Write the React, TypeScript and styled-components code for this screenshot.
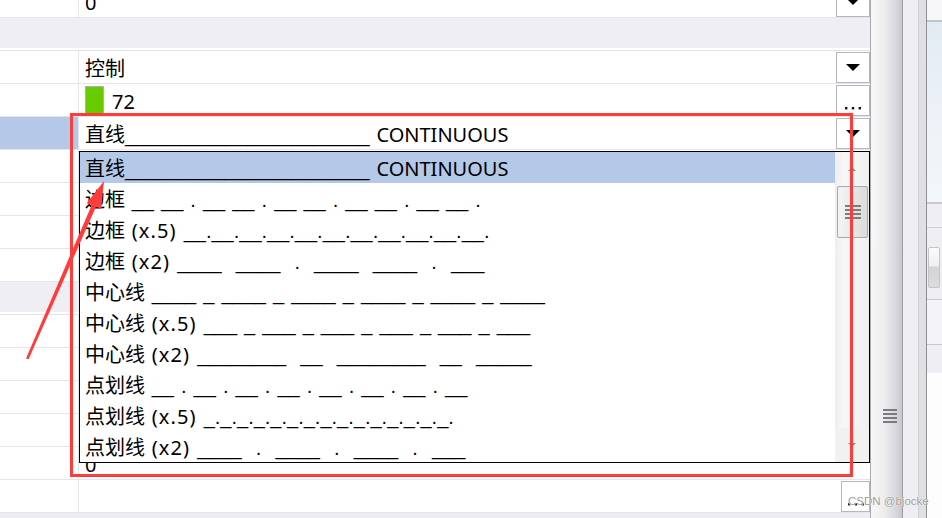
import React from "react";
import styled, { createGlobalStyle } from "styled-components";

const Global = createGlobalStyle`
  html, body { margin: 0; padding: 0; background: #fff; }
  body {
    width: 942px; height: 518px; overflow: hidden;
    font-family: "Noto Sans", "Noto Sans CJK SC", sans-serif;
    color: #000;
  }
`;

const Page = styled.div`
  position: relative;
  width: 942px;
  height: 518px;
  display: flex;
  overflow: hidden;
  background: #fff;
`;

const Grid = styled.div`
  position: relative;
  width: 871px;
  flex: none;
  display: flex;
  flex-direction: column;
  border-right: 1px solid #a9a9b1;
  box-sizing: border-box;
  overflow: hidden;
`;

const Rows = styled.div`
  margin-top: -15px;
  display: flex;
  flex-direction: column;
`;

const Row = styled.div`
  height: 33px;
  flex: none;
  box-sizing: border-box;
  border-bottom: 1px solid #e5e5eb;
  display: flex;
`;

const CategoryRow = styled.div`
  height: 33px;
  flex: none;
  box-sizing: border-box;
  border-bottom: 1px solid #e2e2e8;
  padding-bottom: 2px;
  display: flex;
`;

const CategoryBand = styled.div`
  flex: 1;
  background: #eeeef3;
`;

const NameCell = styled.div<{ $selected?: boolean }>`
  width: 79px;
  flex: none;
  box-sizing: border-box;
  border-right: 1px solid #e5e5eb;
  background: ${(p) => (p.$selected ? "#b4c8e8" : "#fff")};
`;

const ValueCell = styled.div`
  flex: 1;
  display: flex;
  align-items: center;
  padding-left: 6px;
  min-width: 0;
  font-size: 20px;
  line-height: 24px;
  white-space: pre;
  word-spacing: 1.5px;
`;

const ValueText = styled.div`
  flex: 1;
  min-width: 0;
  overflow: hidden;
  padding-top: 4px;
`;

const Swatch = styled.span`
  width: 19px;
  height: 28px;
  box-sizing: border-box;
  border: 1px solid #b0b0b6;
  background: #66cc00;
  margin-right: 8px;
  flex: none;
`;

const CellButton = styled.div<{ $narrow?: boolean; $dots?: boolean }>`
  width: ${(p) => (p.$narrow ? 29 : 34)}px;
  height: 31px;
  flex: none;
  align-self: flex-start;
  margin-top: 1px;
  box-sizing: border-box;
  border: 1px solid #b6b6be;
  background: #fff;
  display: flex;
  justify-content: center;
  align-items: ${(p) => (p.$dots ? "flex-end" : "center")};
  padding-bottom: ${(p) => (p.$dots ? 5 : 0)}px;
`;

const BottomStrip = styled.div`
  flex: 1;
  background: #eeeef2;
`;

const Pattern = styled.span`
  font-family: "Liberation Sans", sans-serif;
`;

const Suffix = styled.span`
  letter-spacing: 1.1px;
`;

/* dropdown list overlay */
const Dropdown = styled.div`
  position: absolute;
  left: 79px;
  top: 151px;
  width: 791px;
  height: 312px;
  box-sizing: border-box;
  border: 1px solid #000;
  background: #fff;
  display: flex;
  z-index: 2;
`;

const List = styled.div`
  flex: 1;
  display: flex;
  flex-direction: column;
  min-width: 0;
`;

const Item = styled.div<{ $selected?: boolean }>`
  height: 31px;
  flex: none;
  box-sizing: border-box;
  display: flex;
  align-items: center;
  padding-left: 5px;
  padding-top: 2px;
  font-size: 20px;
  line-height: 24px;
  white-space: pre;
  word-spacing: 1.5px;
  background: ${(p) => (p.$selected ? "#b4c8e8" : "#fff")};
`;

const ListScroll = styled.div`
  width: 34px;
  flex: none;
  display: flex;
  flex-direction: column;
  align-items: center;
  background: linear-gradient(to right, #eeeeee, #f7f7f7 25%, #f3f3f3 80%, #ececec);
`;

const ArrowBox = styled.div<{ $bottom?: boolean }>`
  height: 34px;
  width: 100%;
  flex: none;
  display: flex;
  align-items: center;
  justify-content: center;
  background: ${(p) => (p.$bottom ? "#f1f1f1" : "transparent")};
`;

const ListThumb = styled.div`
  width: 31px;
  height: 52px;
  margin-left: 1px;
  box-sizing: border-box;
  border: 1px solid #a9a9ad;
  border-radius: 2px;
  background: linear-gradient(to right, #f4f4f4, #e9e9e9 50%, #d9d9db);
  display: flex;
  align-items: center;
  justify-content: center;
`;

const Grip = styled.div<{ $w: number }>`
  width: ${(p) => p.$w}px;
  height: 14px;
  background: repeating-linear-gradient(
    to bottom,
    #7c7c7c 0px,
    #7c7c7c 2px,
    transparent 2px,
    transparent 4px
  );
`;

const Spacer = styled.div`
  flex: 1;
`;

/* right-hand strips */
const VScroll = styled.div`
  width: 32px;
  flex: none;
  box-sizing: border-box;
  border-right: 1px solid #9c9ca4;
  background: linear-gradient(to right, #f7f7f7 0%, #eeeeef 40%, #d8d8dc 80%, #c7c7cc 100%);
  display: flex;
  flex-direction: column;
`;

const VThumb = styled.div`
  margin-top: auto;
  height: 204px;
  display: flex;
  align-items: center;
  justify-content: flex-end;
  padding-right: 5px;
`;

const LavStrip = styled.div`
  width: 15px;
  flex: none;
  background: #eeeef3;
  border-right: 1px solid #cfcfd6;
`;

const GrayStrip = styled.div`
  width: 7px;
  flex: none;
  background: #e0e0e2;
  border-right: 1px solid #8e8e96;
`;

const RightPanel = styled.div`
  flex: 1;
  display: flex;
  flex-direction: column;
  min-width: 0;
`;

const PanelBand = styled.div<{ $h: number; $bg: string; $line?: string; $lw?: number }>`
  height: ${(p) => p.$h}px;
  flex: none;
  background: ${(p) => p.$bg};
  border-bottom: ${(p) => (p.$line ? `${p.$lw ?? 1}px solid ${p.$line}` : "none")};
`;

const PanelButtonBand = styled.div`
  height: 72px;
  flex: none;
  background: #eeeef3;
  border-bottom: 1px solid #c8c8d0;
  padding-top: 19px;
  box-sizing: border-box;
`;

const PanelButton = styled.div`
  width: 12px;
  height: 41px;
  margin-left: 1px;
  box-sizing: border-box;
  border: 1px solid #c4c4c8;
  border-radius: 2px;
  background: linear-gradient(to bottom, #fafafa 0%, #f0f0f0 45%, #d4d4d6 50%, #dcdcde 100%);
`;

const PanelRest = styled.div`
  flex: 1;
  background: #fdfdfd;
`;

/* annotations */
const RedBox = styled.div`
  position: absolute;
  left: 70px;
  top: 113px;
  width: 783px;
  height: 364px;
  box-sizing: border-box;
  border: 3px solid #ff3c3c;
  z-index: 3;
  pointer-events: none;
`;

const ArrowSvg = styled.svg`
  position: absolute;
  left: 24px;
  top: 178px;
  width: 86px;
  height: 184px;
  z-index: 4;
  pointer-events: none;
`;

const Watermark = styled.div`
  position: absolute;
  left: 848px;
  top: 495px;
  font-family: "Liberation Sans", sans-serif;
  font-size: 11.5px;
  color: #9c9c9c;
  text-shadow: 0 0 1px #fff, 0 0 1px #fff;
  white-space: nowrap;
  z-index: 5;
`;

const DownTri = () => (
  <svg width="14" height="7" viewBox="0 0 14 7">
    <polygon points="0,0 14,0 7,7" fill="#000" />
  </svg>
);

const Dots = () => (
  <svg width="16" height="3" viewBox="0 0 16 3">
    <rect x="0" y="0" width="2.4" height="2.4" fill="#111" />
    <rect x="6.8" y="0" width="2.4" height="2.4" fill="#111" />
    <rect x="13.6" y="0" width="2.4" height="2.4" fill="#111" />
  </svg>
);

const SmallTri = ({ up }: { up?: boolean }) => (
  <svg width="8" height="4" viewBox="0 0 8 4">
    <polygon points={up ? "0,4 8,4 4,0" : "0,0 8,0 4,4"} fill="#8a8a8e" />
  </svg>
);

type LineType = { zh: string; sfx?: string; pat: string; tail?: string };

const solid: LineType = { zh: "直线", pat: "_".repeat(22), tail: " CONTINUOUS" };

const lineTypes: LineType[] = [
  solid,
  { zh: "边框 ", pat: "__ __ . __ __ . __ __ . __ __ . __ __ ." },
  { zh: "边框 ", sfx: "(x.5)", pat: " __.__.__.__.__.__.__.__.__.__.__." },
  { zh: "边框 ", sfx: "(x2)", pat: " ____  ____  .  ____  ____  .  ___" },
  { zh: "中心线 ", pat: "____ _ ____ _ ____ _ ____ _ ____ _ ____" },
  { zh: "中心线 ", sfx: "(x.5)", pat: " ___ _ ___ _ ___ _ ___ _ ___ _ ___" },
  { zh: "中心线 ", sfx: "(x2)", pat: " ________  __  ________  __  _____" },
  { zh: "点划线 ", pat: "__ . __ . __ . __ . __ . __ . __ . __" },
  { zh: "点划线 ", sfx: "(x.5)", pat: " " + "_.".repeat(15) },
  { zh: "点划线 ", sfx: "(x2)", pat: " ____  .  ____  .  ____  .  ___" },
];

const LineLabel = ({ lt }: { lt: LineType }) => (
  <>
    {lt.zh}
    {lt.sfx && <Suffix>{lt.sfx}</Suffix>}
    <Pattern>{lt.pat}</Pattern>
    {lt.tail}
  </>
);

const EmptyRow = () => (
  <Row>
    <NameCell />
    <ValueCell />
  </Row>
);

export default function App() {
  return (
    <Page>
      <Global />
      <Grid>
        <Rows>
          <Row>
            <NameCell />
            <ValueCell>
              <ValueText>0</ValueText>
              <CellButton>
                <DownTri />
              </CellButton>
            </ValueCell>
          </Row>
          <CategoryRow>
            <CategoryBand />
          </CategoryRow>
          <Row>
            <NameCell />
            <ValueCell>
              <ValueText>控制</ValueText>
              <CellButton>
                <DownTri />
              </CellButton>
            </ValueCell>
          </Row>
          <Row>
            <NameCell />
            <ValueCell>
              <Swatch />
              <ValueText>72</ValueText>
              <CellButton $dots>
                <Dots />
              </CellButton>
            </ValueCell>
          </Row>
          <Row>
            <NameCell $selected />
            <ValueCell>
              <ValueText>
                <LineLabel lt={solid} />
              </ValueText>
              <CellButton>
                <DownTri />
              </CellButton>
            </ValueCell>
          </Row>
          <EmptyRow />
          <EmptyRow />
          <EmptyRow />
          <EmptyRow />
          <CategoryRow>
            <CategoryBand />
          </CategoryRow>
          <EmptyRow />
          <EmptyRow />
          <EmptyRow />
          <EmptyRow />
          <Row>
            <NameCell />
            <ValueCell>
              <ValueText>0</ValueText>
            </ValueCell>
          </Row>
          <Row>
            <NameCell />
            <ValueCell>
              <ValueText />
              <CellButton $narrow $dots>
                <Dots />
              </CellButton>
            </ValueCell>
          </Row>
        </Rows>
        <BottomStrip />

        <Dropdown>
          <List>
            {lineTypes.map((lt, i) => (
              <Item key={i} $selected={i === 0}>
                <LineLabel lt={lt} />
              </Item>
            ))}
          </List>
          <ListScroll>
            <ArrowBox>
              <SmallTri up />
            </ArrowBox>
            <ListThumb>
              <Grip $w={16} />
            </ListThumb>
            <Spacer />
            <ArrowBox $bottom>
              <SmallTri />
            </ArrowBox>
          </ListScroll>
        </Dropdown>
      </Grid>

      <VScroll>
        <VThumb>
          <Grip $w={14} />
        </VThumb>
      </VScroll>
      <LavStrip />
      <GrayStrip />
      <RightPanel>
        <PanelBand $h={20} $bg="#f7f7f9" $line="#c3c4cc" $lw={2} />
        <PanelBand $h={180} $bg="linear-gradient(to bottom, #e2eaf3, #eef3f8 60%, #f3f6fa)" $line="#c8c8ce" $lw={2} />
        <PanelBand $h={23} $bg="#eeeef3" $line="#d0d0d6" />
        <PanelButtonBand>
          <PanelButton />
        </PanelButtonBand>
        <PanelBand $h={44} $bg="#f4f4f8" $line="#c8c8d0" />
        <PanelBand $h={28} $bg="#eeeef3" />
        <PanelRest />
      </RightPanel>

      <RedBox />
      <ArrowSvg viewBox="0 0 86 184">
        <polygon
          points="2,180.5 67.6,27.2 62.6,25.2 80,3 77.2,30.8 72,28.8 4.6,181.2"
          fill="#ff3c3c"
        />
      </ArrowSvg>
      <Watermark>CSDN @bjocke</Watermark>
    </Page>
  );
}
